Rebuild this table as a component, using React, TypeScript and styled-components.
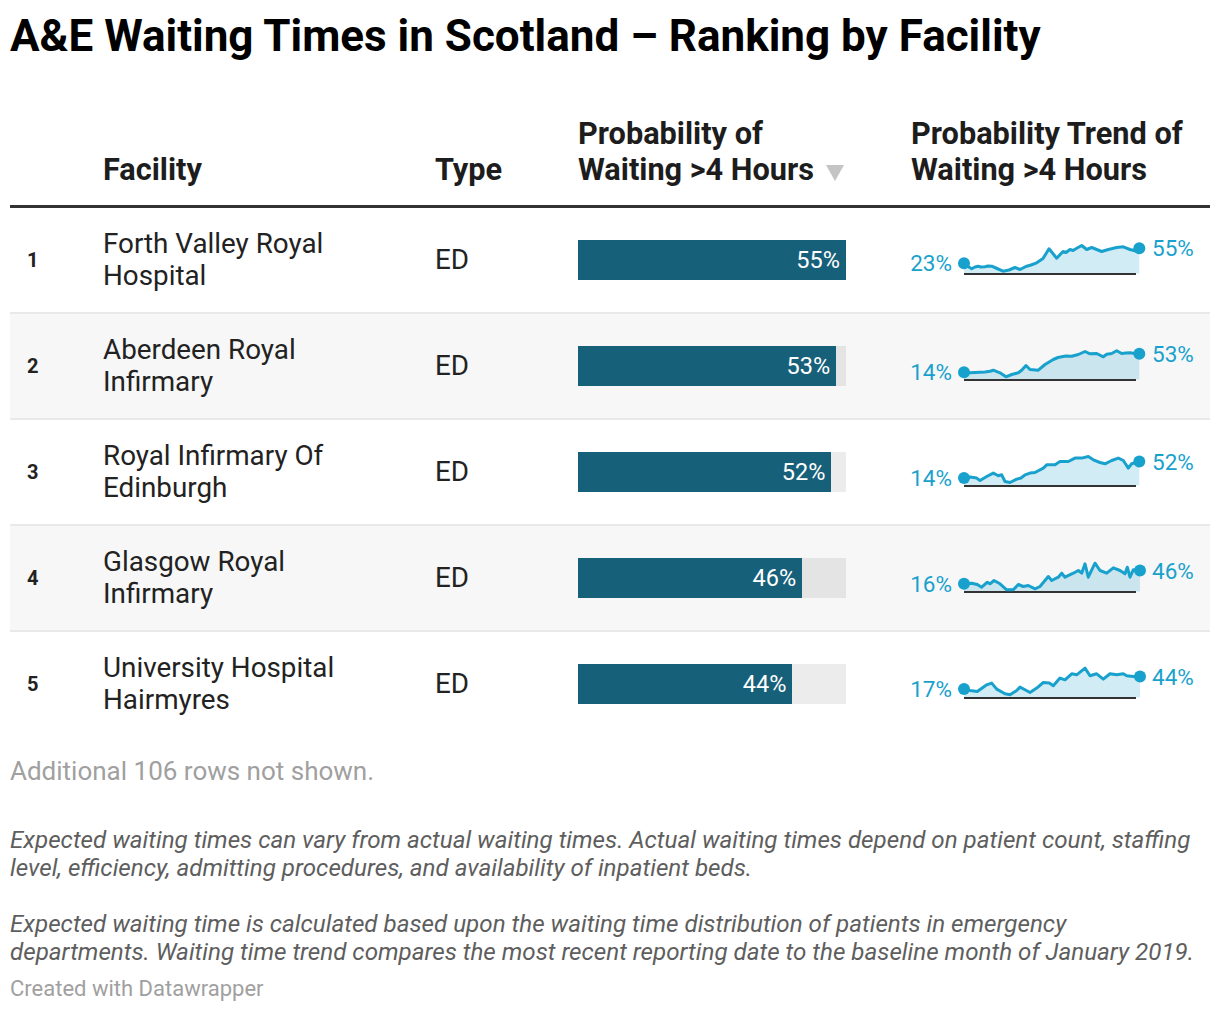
import React from "react";
import styled, { createGlobalStyle } from "styled-components";

const GlobalStyle = createGlobalStyle`
  html, body { margin: 0; padding: 0; background: #ffffff; }
  body { font-family: Roboto, "Liberation Sans", Arial, sans-serif; color: #222; }
`;

const COLS = "93px 332px 143px 333px 1fr";

const Page = styled.div`
  width: 1200px;
  padding: 10px 10px 0;
`;

const Title = styled.h1`
  margin: 0;
  font-size: 44px;
  line-height: 52px;
  font-weight: 700;
  color: #000;
`;

const Table = styled.div`
  margin-top: 54px;
`;

const HeaderRow = styled.div`
  display: grid;
  grid-template-columns: ${COLS};
  align-items: end;
  padding-bottom: 17px;
  border-bottom: 3px solid #333;
`;

const HeadCell = styled.div`
  font-size: 30.7px;
  line-height: 36px;
  font-weight: 700;
  color: #1d1d1d;
`;

const SortArrow = styled.span`
  display: inline-block;
  width: 0;
  height: 0;
  margin-left: 12px;
  border-left: 9px solid transparent;
  border-right: 9px solid transparent;
  border-top: 16px solid #c4c4c4;
  vertical-align: -1px;
`;

const Row = styled.div<{ $alt: boolean }>`
  display: grid;
  grid-template-columns: ${COLS};
  align-items: center;
  height: 104px;
  background: ${(p) => (p.$alt ? "#f7f7f7" : "#ffffff")};
  border-bottom: 2px solid #e9e9e9;
  &:last-child {
    border-bottom: none;
  }
`;

const Rank = styled.div`
  padding-left: 17px;
  font-size: 20px;
  font-weight: 700;
  color: #222;
`;

const TextCell = styled.div<{ $wrap?: number }>`
  font-size: 27.8px;
  line-height: 32px;
  color: #222;
  max-width: ${(p) => (p.$wrap ? `${p.$wrap}px` : "none")};
`;

const BarTrack = styled.div`
  width: 268px;
  height: 40px;
  background: rgba(0, 0, 0, 0.075);
`;

const BarFill = styled.div`
  height: 100%;
  background: #17607a;
  display: flex;
  align-items: center;
  justify-content: flex-end;
  padding-right: 6px;
  box-sizing: border-box;
  color: #fff;
  font-size: 23.5px;
`;

const TrendCell = styled.div`
  height: 104px;
`;

const MoreRows = styled.div`
  margin-top: 20px;
  font-size: 26px;
  line-height: 30px;
  color: #a0a0a0;
`;

const Notes = styled.div`
  margin-top: 40px;
`;

const Note = styled.p`
  margin: 0;
  font-size: 24.2px;
  line-height: 28px;
  font-style: italic;
  color: #5e5e5e;
  & + & {
    margin-top: 28px;
  }
`;

const Credit = styled.div`
  margin-top: 10px;
  font-size: 22px;
  line-height: 26px;
  color: #a0a0a0;
`;

type Pt = [number, number];

interface Facility {
  rank: number;
  name: string;
  type: string;
  prob: number;
  start: string;
  end: string;
  pts: Pt[];
}

const DATA: Facility[] = [
  {
    rank: 1,
    name: "Forth Valley Royal Hospital",
    type: "ED",
    prob: 55,
    start: "23%",
    end: "55%",
    pts: [
      [964, 10.3], [968, 7], [971.7, 4.7], [975, 6.5], [978, 7.3], [981, 6.5], [985, 6.8], [988, 7.5],
      [991.7, 7.3], [997, 5], [1003, 2.3], [1009, 3.5], [1015, 6], [1020, 4], [1026.7, 7.3], [1031, 8.5],
      [1036.7, 10.7], [1043, 15], [1049, 24.7], [1056.7, 15.3], [1063, 22], [1066, 21], [1070, 24],
      [1073, 23], [1076.7, 25.3], [1081.7, 28], [1086.7, 24], [1091.7, 26], [1096.7, 24], [1101.7, 22],
      [1108.3, 24], [1116.7, 26], [1123.3, 26.7], [1130, 24], [1135, 22.7], [1139.3, 25.3],
    ],
  },
  {
    rank: 2,
    name: "Aberdeen Royal Infirmary",
    type: "ED",
    prob: 53,
    start: "14%",
    end: "53%",
    pts: [
      [964, 7.3], [970, 6.7], [975, 7.1], [980, 7.3], [985, 7.6], [990, 8.3], [993.3, 9.3], [1000, 6.7],
      [1006, 2.7], [1011.7, 5], [1018.3, 6.7], [1021.7, 9.3], [1026, 14], [1030, 10], [1038.3, 9.3],
      [1045, 15], [1053.3, 20], [1058, 22], [1061.7, 22.7], [1066, 23.5], [1071.7, 23.3], [1078.3, 25],
      [1085, 28], [1090, 25.7], [1096.7, 26], [1103.3, 22.7], [1106.7, 25.3], [1111.7, 26], [1116.7, 28.7],
      [1121.7, 26], [1126, 26.4], [1130, 26.7], [1135, 25.9], [1139.3, 25.7],
    ],
  },
  {
    rank: 3,
    name: "Royal Infirmary Of Edinburgh",
    type: "ED",
    prob: 52,
    start: "14%",
    end: "52%",
    pts: [
      [964, 7.4], [970, 8.4], [976.7, 7.4], [980, 5], [986.7, 9], [993.3, 12.4], [998.3, 9.7],
      [1001.7, 10.7], [1005, 4], [1010, 3], [1016.7, 6.4], [1021, 7.5], [1025, 10.7], [1030, 12.4],
      [1035, 13], [1043.3, 17.4], [1046.7, 20.7], [1055, 20.7], [1060, 24], [1068.3, 24], [1075, 27.4],
      [1081.7, 27.4], [1088.3, 29], [1093.3, 25.7], [1100, 23], [1105, 21.7], [1111.7, 25],
      [1118.3, 27.4], [1123.3, 25], [1128.3, 17.4], [1131.7, 21.7], [1139.3, 24],
    ],
  },
  {
    rank: 4,
    name: "Glasgow Royal Infirmary",
    type: "ED",
    prob: 46,
    start: "16%",
    end: "46%",
    pts: [
      [964, 7.7], [971.7, 8.3], [977.3, 7], [981.7, 4.3], [987.3, 9.3], [990, 7.7], [994, 11],
      [1000, 7.7], [1006.7, 1.7], [1013.3, 1.7], [1018.3, 7], [1023.3, 5], [1028.3, 6], [1035, 2.7],
      [1040, 5], [1048.3, 15], [1051.7, 11], [1058.3, 14.3], [1061.7, 18.3], [1065, 14.3], [1073.3, 18.3],
      [1078.3, 21], [1081.7, 18.3], [1085, 27.7], [1088.3, 14.3], [1095, 28.3], [1100, 21], [1106.7, 18.3],
      [1113.3, 23.7], [1120, 21], [1125, 17.7], [1127.3, 24.3], [1130, 14.3], [1133.3, 21.7], [1140, 21],
    ],
  },
  {
    rank: 5,
    name: "University Hospital Hairmyres",
    type: "ED",
    prob: 44,
    start: "17%",
    end: "44%",
    pts: [
      [964, 8.4], [970, 7], [977.3, 6], [986.7, 12.7], [991.7, 14.4], [996.7, 8.4], [1005, 3.7],
      [1010, 2.7], [1016.7, 7], [1020, 10.4], [1025, 7.7], [1030, 5], [1036.7, 9.4], [1043.3, 15],
      [1049.3, 14.4], [1053.3, 11.7], [1060, 19.4], [1065, 17.7], [1071.7, 23.7], [1076.7, 22.7],
      [1085, 29.4], [1090, 21.7], [1096.7, 23.7], [1103.3, 18.4], [1110, 23.7], [1116.7, 22.7],
      [1123.3, 23.7], [1126.7, 21.7], [1133.3, 21], [1140, 21],
    ],
  },
];

const MAX_PROB = 55;
const X0 = 911;
const BASE = 65.5;
const LINE = "#18a1cd";

const Sparkline: React.FC<{ pts: Pt[]; start: string; end: string }> = ({ pts, start, end }) => {
  const p = pts.map(([x, h]) => [x - X0, BASE - h] as [number, number]);
  const first = p[0];
  const last = p[p.length - 1];
  const line = p.map(([x, y]) => `${x.toFixed(1)},${y.toFixed(1)}`).join(" ");
  const area = `${line} ${last[0].toFixed(1)},${BASE} ${first[0].toFixed(1)},${BASE}`;
  return (
    <svg width="299" height="104" viewBox="0 0 299 104">
      <polygon points={area} fill="rgba(24,161,205,0.2)" />
      <line x1={first[0]} y1={BASE + 0.5} x2={225} y2={BASE + 0.5} stroke="#333" strokeWidth={2} />
      <polyline points={line} fill="none" stroke={LINE} strokeWidth={3} strokeLinejoin="round" />
      <circle cx={first[0]} cy={first[1]} r={6} fill={LINE} />
      <circle cx={last[0]} cy={last[1]} r={6} fill={LINE} />
      <text
        x={41}
        y={first[1]}
        textAnchor="end"
        dominantBaseline="central"
        fontFamily="Roboto, 'Liberation Sans', sans-serif"
        fontSize={22.5}
        fill={LINE}
      >
        {start}
      </text>
      <text
        x={241}
        y={last[1]}
        textAnchor="start"
        dominantBaseline="central"
        fontFamily="Roboto, 'Liberation Sans', sans-serif"
        fontSize={22.5}
        fill={LINE}
      >
        {end}
      </text>
    </svg>
  );
};

export default function App() {
  return (
    <>
      <GlobalStyle />
      <Page>
        <Title>A&amp;E Waiting Times in Scotland – Ranking by Facility</Title>
        <Table>
          <HeaderRow>
            <div />
            <HeadCell>Facility</HeadCell>
            <HeadCell>Type</HeadCell>
            <HeadCell>
              Probability of
              <br />
              Waiting &gt;4 Hours
              <SortArrow />
            </HeadCell>
            <HeadCell>
              Probability Trend of
              <br />
              Waiting &gt;4 Hours
            </HeadCell>
          </HeaderRow>
          {DATA.map((d, i) => (
            <Row key={d.rank} $alt={i % 2 === 1}>
              <Rank>{d.rank}</Rank>
              <TextCell $wrap={260}>{d.name}</TextCell>
              <TextCell>{d.type}</TextCell>
              <BarTrack>
                <BarFill style={{ width: `${(d.prob / MAX_PROB) * 100}%` }}>{d.prob}%</BarFill>
              </BarTrack>
              <TrendCell>
                <Sparkline pts={d.pts} start={d.start} end={d.end} />
              </TrendCell>
            </Row>
          ))}
        </Table>
        <MoreRows>Additional 106 rows not shown.</MoreRows>
        <Notes>
          <Note>
            Expected waiting times can vary from actual waiting times. Actual waiting times depend on patient
            count, staffing level, efficiency, admitting procedures, and availability of inpatient beds.
          </Note>
          <Note>
            Expected waiting time is calculated based upon the waiting time distribution of patients in emergency
            departments. Waiting time trend compares the most recent reporting date to the baseline month of
            January 2019.
          </Note>
        </Notes>
        <Credit>Created with Datawrapper</Credit>
      </Page>
    </>
  );
}
